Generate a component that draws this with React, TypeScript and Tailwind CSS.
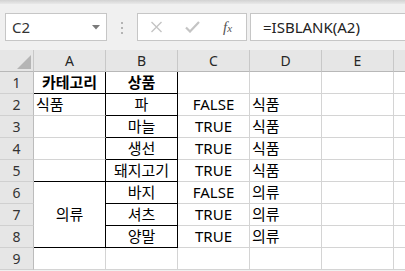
import React from 'react';

type Row = {
  n: number;
  a?: React.ReactNode;
  aCls: string;
  b: string;
  bCls: string;
  c: string;
  d: string;
};

const gray = 'border-r border-b border-[#d4d4d4]';
const boxed = 'border-r border-b border-black';
const rightOnly = 'border-r border-b border-r-black border-b-[#d4d4d4]';

const rows: Row[] = [
  { n: 1, a: <span className="font-bold">카테고리</span>, aCls: `${boxed} justify-center`, b: '상품', bCls: `${boxed} justify-center font-bold`, c: '', d: '' },
  { n: 2, a: '식품', aCls: `${rightOnly} justify-start pl-[2px]`, b: '파', bCls: `${boxed} justify-center`, c: 'FALSE', d: '식품' },
  { n: 3, a: '', aCls: rightOnly, b: '마늘', bCls: `${boxed} justify-center`, c: 'TRUE', d: '식품' },
  { n: 4, a: '', aCls: rightOnly, b: '생선', bCls: `${boxed} justify-center`, c: 'TRUE', d: '식품' },
  { n: 5, a: '', aCls: boxed, b: '돼지고기', bCls: `${boxed} justify-center`, c: 'TRUE', d: '식품' },
  { n: 6, a: '의류', aCls: `${boxed} justify-center row-span-3`, b: '바지', bCls: `${boxed} justify-center`, c: 'FALSE', d: '의류' },
  { n: 7, b: '셔츠', aCls: '', bCls: `${boxed} justify-center`, c: 'TRUE', d: '의류' },
  { n: 8, b: '양말', aCls: '', bCls: `${boxed} justify-center`, c: 'TRUE', d: '의류' },
  { n: 9, a: '', aCls: gray, b: '', bCls: gray, c: '', d: '' },
];

function ColHead({ label }: { label: string }) {
  return (
    <div className="flex items-center justify-center border-r border-b border-r-[#c8c8c8] border-b-[#b8b8b8] bg-[#e6e6e6] text-[14px] text-[#262626]">
      {label}
    </div>
  );
}

export default function App() {
  return (
    <div className="w-[405px] h-[271px] overflow-hidden bg-[#f0f0f0] font-['Noto_Sans','Noto_Sans_CJK_KR',sans-serif] text-black">
      <div className="h-[4px] bg-linear-to-b from-[#d2d2d2] to-[#e9e9e9]" />
      <div className="h-[46px] flex items-start pt-[9px]">
        <div className="ml-[5px] w-[102px] h-[28px] bg-white border border-[#c6c6c6] flex items-center justify-between pl-[6px] pr-[6px]">
          <span className="text-[15px] text-[#333]">C2</span>
          <svg width="8" height="5" viewBox="0 0 8 5">
            <polygon points="0,0 8,0 4,4.5" fill="#7a7a7a" />
          </svg>
        </div>
        <div className="ml-[14px] mt-[9px] flex flex-col gap-[3px]">
          <div className="w-[2px] h-[2px] bg-[#b4b4b4]" />
          <div className="w-[2px] h-[2px] bg-[#b4b4b4]" />
          <div className="w-[2px] h-[2px] bg-[#b4b4b4]" />
        </div>
        <div className="ml-[14px] w-[110px] h-[28px] bg-white border border-[#c6c6c6] flex items-center pl-[12px]">
          <svg width="13" height="12" viewBox="0 0 13 12">
            <path d="M1.5 1L11.5 11M11.5 1L1.5 11" stroke="#c4c4c4" strokeWidth="1.4" />
          </svg>
          <svg className="ml-[22px]" width="15" height="12" viewBox="0 0 15 12">
            <path d="M1 6.5L5 10.5L14 1" stroke="#c4c4c4" strokeWidth="2.2" fill="none" />
          </svg>
          <span className="ml-[23px] font-['Liberation_Serif',serif] italic text-[15px] text-[#555] leading-none">
            f<span className="text-[11px]">x</span>
          </span>
        </div>
        <div className="ml-[3px] flex-1 h-[28px] bg-white border border-r-0 border-[#c6c6c6] flex items-center pl-[12px]">
          <span className="text-[15px] text-[#222]">=ISBLANK(A2)</span>
        </div>
      </div>

      <div className="grid grid-cols-[34px_72px_72px_72px_72px_72px_72px] auto-rows-[22px] bg-white text-[15px] leading-[21px]">
        <div className="relative border-r border-b border-r-[#c8c8c8] border-b-[#b8b8b8] bg-[#e6e6e6]">
          <svg className="absolute left-0 top-0" width="33" height="21" viewBox="0 0 33 21">
            <polygon points="17,19 31,5 31,19" fill="#b5b5b5" />
          </svg>
        </div>
        {['A', 'B', 'C', 'D', 'E', ''].map((l, i) => (
          <ColHead key={i} label={l} />
        ))}
        {rows.map((r) => (
          <React.Fragment key={r.n}>
            <div className="flex items-center justify-center border-r border-b border-r-[#bcbcbc] border-b-[#d0d0d0] bg-[#e6e6e6] text-[14px] text-[#333]">
              {r.n}
            </div>
            {r.a !== undefined && <div className={`flex items-center ${r.aCls}`}>{r.a}</div>}
            <div className={`flex items-center ${r.bCls}`}>{r.b}</div>
            <div className={`flex items-center justify-center ${gray}`}>{r.c}</div>
            <div className={`flex items-center pl-[2px] ${gray}`}>{r.d}</div>
            <div className={gray} />
            <div className={gray} />
          </React.Fragment>
        ))}
      </div>
    </div>
  );
}
